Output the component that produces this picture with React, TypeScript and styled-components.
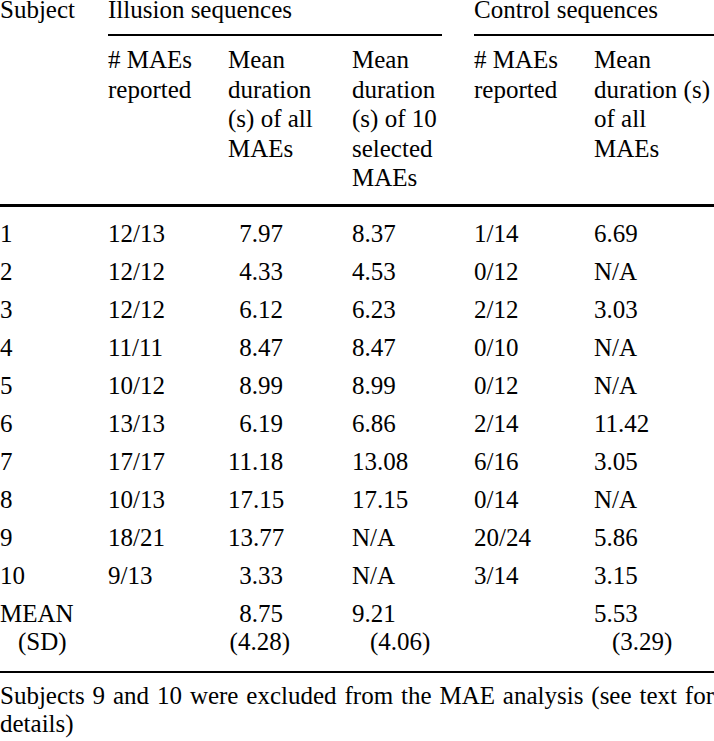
import React from 'react';
import styled, { createGlobalStyle } from 'styled-components';

// table data
const rows: string[][] = [
  ['1', '12/13', '7.97', '8.37', '1/14', '6.69'],
  ['2', '12/12', '4.33', '4.53', '0/12', 'N/A'],
  ['3', '12/12', '6.12', '6.23', '2/12', '3.03'],
  ['4', '11/11', '8.47', '8.47', '0/10', 'N/A'],
  ['5', '10/12', '8.99', '8.99', '0/12', 'N/A'],
  ['6', '13/13', '6.19', '6.86', '2/14', '11.42'],
  ['7', '17/17', '11.18', '13.08', '6/16', '3.05'],
  ['8', '10/13', '17.15', '17.15', '0/14', 'N/A'],
  ['9', '18/21', '13.77', 'N/A', '20/24', '5.86'],
  ['10', '9/13', '3.33', 'N/A', '3/14', '3.15'],
];

// [first line, second line]
const summary: [string, string][] = [
  ['MEAN', '(SD)'],
  ['', ''],
  ['8.75', '(4.28)'],
  ['9.21', '(4.06)'],
  ['', ''],
  ['5.53', '(3.29)'],
];

const headers: string[][] = [
  [],
  ['# MAEs', 'reported'],
  ['Mean', 'duration', '(s) of all', 'MAEs'],
  ['Mean', 'duration', '(s) of 10', 'selected', 'MAEs'],
  ['# MAEs', 'reported'],
  ['Mean', 'duration (s)', 'of all', 'MAEs'],
];

const widths = [108, 120, 124, 122, 120, 120];

const App = () => {
  return (
    <>
      <GlobalStyle />
      <Wrap>
        <Table>
          <colgroup>
            {widths.map((w, i) => (
              <col key={i} style={{ width: w }} />
            ))}
          </colgroup>
          <thead>
            <tr>
              <GroupCell>Subject</GroupCell>
              <GroupCell colSpan={3}>
                <GroupLabel $gap={32}>Illusion sequences</GroupLabel>
              </GroupCell>
              <GroupCell colSpan={2}>
                <GroupLabel>Control sequences</GroupLabel>
              </GroupCell>
            </tr>
            <tr>
              {headers.map((lines, i) => (
                <HeadCell key={i}>
                  {lines.map((line, j) => (
                    <div key={j}>{line}</div>
                  ))}
                </HeadCell>
              ))}
            </tr>
          </thead>
          <tbody>
            {rows.map((row, i) => (
              <BodyRow key={i} $first={i === 0}>
                {row.map((value, j) => (
                  <Cell key={j} $right={j === 2}>
                    {value}
                  </Cell>
                ))}
              </BodyRow>
            ))}
            <tr>
              {summary.map(([mean, sd], j) => (
                <SummaryCell key={j} $right={j === 2}>
                  <div>{mean || '\u00a0'}</div>
                  <SdLine $right={j === 2}>{sd || '\u00a0'}</SdLine>
                </SummaryCell>
              ))}
            </tr>
          </tbody>
        </Table>
        <Footnote>
          Subjects 9 and 10 were excluded from the MAE analysis (see text for details)
        </Footnote>
      </Wrap>
    </>
  );
};

// styled-components
const GlobalStyle = createGlobalStyle`
  body {
    margin: 0;
    background: #fff;
    color: #000;
    font-family: 'Liberation Serif', 'Times New Roman', serif;
    overflow: hidden;
  }
`;

const Wrap = styled.div`
  width: 714px;
  font-size: 25px;
`;

const Table = styled.table`
  width: 714px;
  table-layout: fixed;
  border-collapse: separate;
  border-spacing: 0;
  th {
    font-weight: normal;
    text-align: left;
    vertical-align: top;
    padding: 0;
    white-space: nowrap;
  }
`;

const GroupCell = styled.th`
  line-height: 20px;
`;

const GroupLabel = styled.div<{ $gap?: number }>`
  padding-bottom: 14px;
  margin-right: ${(p) => p.$gap ?? 0}px;
  border-bottom: 2px solid #000;
`;

const HeadCell = styled.th`
  && {
    padding: 9px 0 11.4px;
  }
  line-height: 29.5px;
  border-bottom: 3px solid #000;
`;

const BodyRow = styled.tr<{ $first?: boolean }>`
  td {
    padding-top: ${(p) => (p.$first ? '8.3px' : '0')};
  }
`;

const Cell = styled.td<{ $right?: boolean }>`
  padding: 0;
  padding-right: ${(p) => (p.$right ? '69px' : '0')};
  text-align: ${(p) => (p.$right ? 'right' : 'left')};
  line-height: 38px;
  vertical-align: top;
  white-space: nowrap;
`;

const SummaryCell = styled.td<{ $right?: boolean }>`
  padding: 5.3px ${(p) => (p.$right ? '69px' : '0')} 15px 0;
  text-align: ${(p) => (p.$right ? 'right' : 'left')};
  line-height: 28px;
  vertical-align: top;
  white-space: nowrap;
  border-bottom: 2px solid #000;
`;

const SdLine = styled.div<{ $right?: boolean }>`
  padding-left: ${(p) => (p.$right ? '0' : '18px')};
  margin-right: ${(p) => (p.$right ? '-7px' : '0')};
`;

const Footnote = styled.p`
  margin: 9px 0 0;
  line-height: 28px;
  text-align: justify;
`;

export default App;
